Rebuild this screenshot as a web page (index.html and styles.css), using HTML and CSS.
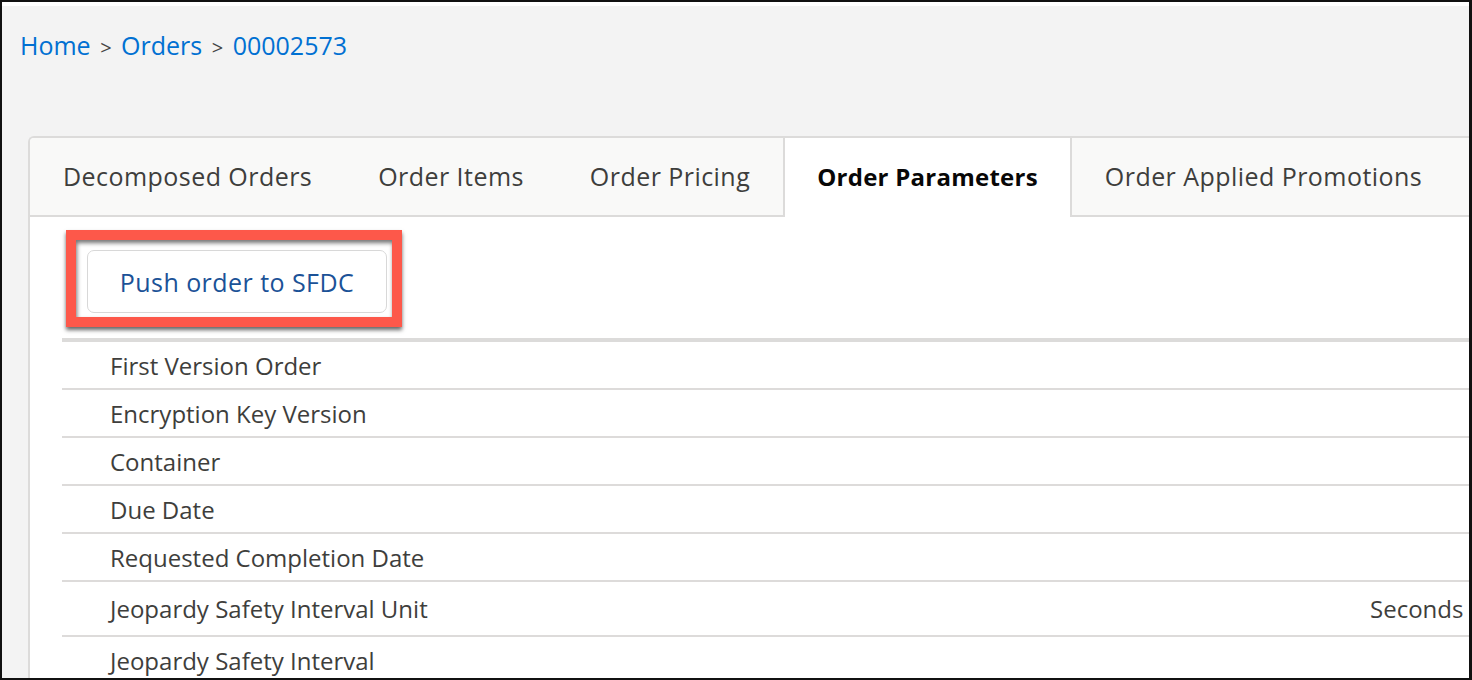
FILE: index.html
```html
<!DOCTYPE html>
<html lang="en">
<head>
  <meta charset="UTF-8">
  <meta name="viewport" content="width=device-width, initial-scale=1">
  <title>Order 00002573</title>
  <link rel="stylesheet" href="styles.css">
</head>
<body>

  <div class="screen">
    <div class="page">

      <!-- Breadcrumb -->
      <nav class="breadcrumb">
        <a href="#">Home</a>
        <span class="sep">&gt;</span>
        <a href="#">Orders</a>
        <span class="sep">&gt;</span>
        <a href="#">00002573</a>
      </nav>

      <!-- Order tabs -->
      <div class="card">
        <ul class="tabs">
          <li class="tab">Decomposed Orders</li>
          <li class="tab">Order Items</li>
          <li class="tab">Order Pricing</li>
          <li class="tab active">Order Parameters</li>
          <li class="tab">Order Applied Promotions</li>
        </ul>

        <div class="tab-body">
          <div class="callout">
            <button class="push-btn" type="button">Push order to SFDC</button>
          </div>

          <div class="params">
            <div class="param-row"><span class="label">First Version Order</span><span class="value"></span></div>
            <div class="param-row"><span class="label">Encryption Key Version</span><span class="value"></span></div>
            <div class="param-row"><span class="label">Container</span><span class="value"></span></div>
            <div class="param-row"><span class="label">Due Date</span><span class="value"></span></div>
            <div class="param-row"><span class="label">Requested Completion Date</span><span class="value"></span></div>
            <div class="param-row tall"><span class="label">Jeopardy Safety Interval Unit</span><span class="value">Seconds</span></div>
            <div class="param-row"><span class="label">Jeopardy Safety Interval</span><span class="value"></span></div>
          </div>
        </div>
      </div>

    </div>
  </div>

</body>
</html>
```

FILE: styles.css
```css
html, body {
  margin: 0;
  padding: 0;
}

body {
  width: 1472px;
  height: 680px;
  overflow: hidden;
  background: #111;
  font-family: 'Open Sans', sans-serif;
  color: #3e3e3c;
}

.screen {
  box-sizing: border-box;
  width: 1472px;
  height: 680px;
  border: 2px solid #111;
  border-right-width: 3px;
}

.page {
  box-sizing: border-box;
  height: 100%;
  background: #f3f3f3;
  border-top: 4px solid #fff;
  overflow: hidden;
}

/* breadcrumb */
.breadcrumb {
  padding: 24px 0 0 18px;
  font-size: 25px;
  line-height: 30px;
  height: 30px;
}

.breadcrumb a {
  color: #0070d2;
  text-decoration: none;
}

.breadcrumb .sep {
  color: #444;
  font-size: 20px;
  margin: 0 3px;
}

/* card with tabs */
.card {
  margin: 76px 0 0 26px;
  width: 1500px;
  background: #fff;
  border-top: 2px solid #dcdbda;
  border-left: 2px solid #dcdbda;
  border-top-left-radius: 6px;
  overflow: hidden;
}

.tabs {
  list-style: none;
  margin: 0;
  padding: 0;
  display: flex;
  background: #f9f9f8;
  border-bottom: 2px solid #dcdbda;
  height: 77px;
}

.tab {
  padding: 0 33px;
  font-size: 25px;
  letter-spacing: 0.45px;
  line-height: 77px;
  color: #3e3e3c;
  white-space: nowrap;
}

.tab.active {
  background: #fff;
  color: #080707;
  font-size: 24px;
  font-weight: 700;
  letter-spacing: 0.25px;
  padding: 0 32px 2px;
  border-left: 2px solid #dcdbda;
  border-right: 2px solid #dcdbda;
  margin-bottom: -2px;
}

.tab-body {
  padding: 13px 0 0 32px;
}

/* highlighted button */
.callout {
  display: inline-block;
  margin-left: 4px;
  margin-bottom: 11px;
  padding: 10px 5px 4px 11px;
  border: 10px solid #fd584a;
  background: #fff;
  box-shadow: 0 3px 4px rgba(0, 0, 0, 0.6), inset 1px 3px 4px rgba(0, 0, 0, 0.55);
}

.push-btn {
  display: block;
  width: 300px;
  height: 63px;
  background: #fff;
  border: 1.5px solid #d8d8d8;
  border-radius: 7px;
  font-family: 'Open Sans', sans-serif;
  font-size: 25px;
  letter-spacing: 0.45px;
  color: #1b5297;
  cursor: pointer;
}

/* parameters list */
.params {
  border-top: 4px solid #dcdbda;
}

.param-row {
  display: grid;
  grid-template-columns: 1260px 1fr;
  align-items: center;
  height: 46px;
  padding-left: 48px;
  border-bottom: 2px solid #dddbda;
  font-size: 24px;
  color: #3e3e3c;
}

.param-row.tall {
  height: 53px;
}

.value {
  white-space: nowrap;
}
```
